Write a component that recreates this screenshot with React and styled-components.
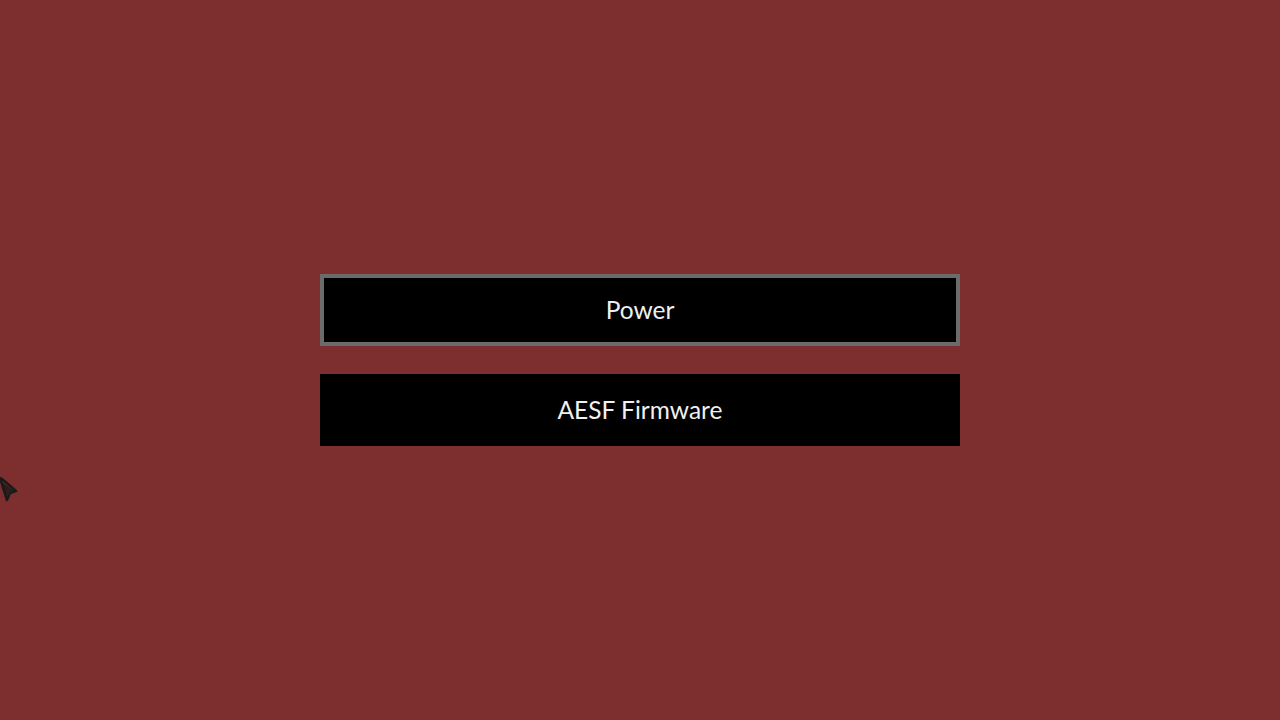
import React from "react";
import styled, { createGlobalStyle } from "styled-components";

const Global = createGlobalStyle`
  html, body { margin: 0; padding: 0; height: 100%; }
  body { background: #7d2f2f; font-family: Lato, "Noto Sans", sans-serif; overflow: hidden; }
  #root { height: 100%; }
`;

const Screen = styled.div`
  position: relative;
  width: 1280px;
  height: 720px;
  background: #7d2f2f;
  display: flex;
  flex-direction: column;
  align-items: center;
  padding-top: 274px;
  box-sizing: border-box;
  gap: 28px;
`;

const MenuButton = styled.button`
  width: 640px;
  height: 72px;
  box-sizing: border-box;
  background: #000;
  color: #f0f0f0;
  border: 4px solid ${(p) => (p.$focused ? "#6b6b6b" : "#000")};
  font-family: Lato, "Noto Sans", sans-serif;
  font-size: 24.5px;
  display: flex;
  align-items: center;
  justify-content: center;
  padding: 0 0 2px;
  cursor: pointer;
`;

const Cursor = styled.svg`
  position: absolute;
  left: 0;
  top: 476px;
`;

export default function App() {
  return (
    <>
      <Global />
      <Screen>
        <MenuButton $focused>Power</MenuButton>
        <MenuButton>AESF Firmware</MenuButton>
        <Cursor width="18" height="28" viewBox="0 0 18 28">
          <path d="M0 2 L2 3 L16 15 L10 17 L7 24 Z" fill="#7d2f2f" stroke="#1a1a1a" strokeWidth="2.5" strokeLinejoin="round" />
          <path d="M1 5 L6 22 L9 16 L14 15 Z" fill="#1a1a1a" opacity="0.85" />
        </Cursor>
      </Screen>
    </>
  );
}
